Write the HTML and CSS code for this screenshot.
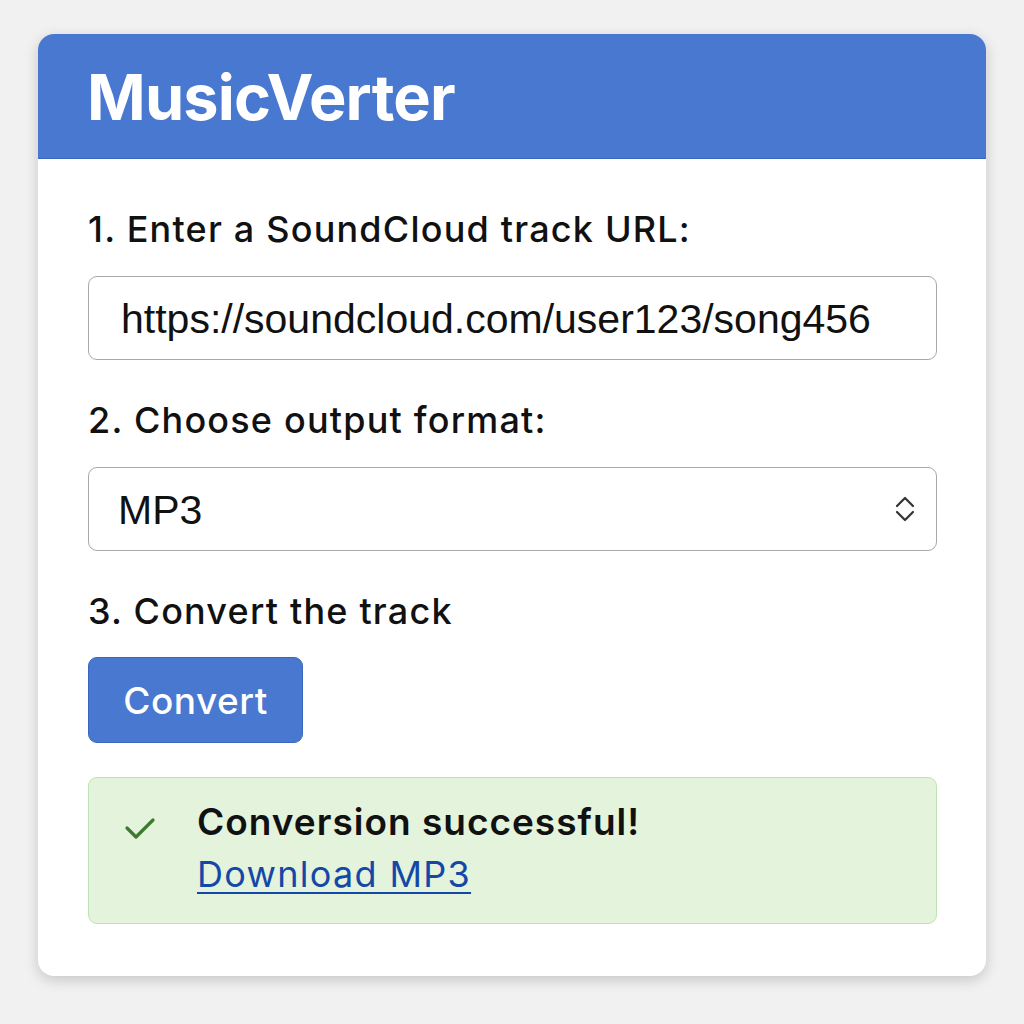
FILE: index.html
```html
<!DOCTYPE html>
<html>
<head>
<meta charset="utf-8">
<link rel="stylesheet" href="styles.css">
</head>
<body>
<div class="card">
  <header class="card-header"><h1 class="title">MusicVerter</h1></header>
  <main class="card-body">
    <label class="step step-1">1. Enter a SoundCloud track URL:</label>
    <div class="field"><span class="field-text">https://soundcloud.com/user123/song456</span></div>
    <label class="step">2. Choose output format:</label>
    <div class="field select">
      <span class="field-text">MP3</span>
      <svg class="chev" width="22" height="28" viewBox="0 0 22 28"><path d="M3 11 L11 3 L19 11" fill="none" stroke="#333" stroke-width="2.2" stroke-linecap="round" stroke-linejoin="round"/><path d="M3 17 L11 25 L19 17" fill="none" stroke="#333" stroke-width="2.2" stroke-linecap="round" stroke-linejoin="round"/></svg>
    </div>
    <label class="step">3. Convert the track</label>
    <div class="btn-row"><button class="btn">Convert</button></div>
    <div class="success">
      <svg class="check" width="34" height="24" viewBox="0 0 34 24"><path d="M3 11 L12 20 L29 3" fill="none" stroke="#3b7a2e" stroke-width="3.2" stroke-linecap="round" stroke-linejoin="round"/></svg>
      <div class="success-text">
        <div class="success-title">Conversion successful!</div>
        <a class="dl" href="#">Download MP3</a>
      </div>
    </div>
  </main>
</div>
</body>
</html>
```
FILE: styles.css
```css
html, body { margin: 0; padding: 0; }
body {
  background: #f1f1f1;
  width: 1024px;
  height: 1024px;
  font-family: Inter, "Noto Sans", sans-serif;
  color: #111;
}
.card {
  margin: 34px 0 0 38px;
  width: 948px;
  height: 942px;
  background: #fff;
  border-radius: 16px;
  box-shadow: 0 4px 14px rgba(0,0,0,0.18);
  overflow: hidden;
  box-sizing: border-box;
}
.card-header {
  background: #4878cf;
  height: 125px;
  display: flex;
  align-items: center;
  padding-left: 49px;
  border-bottom: 1px solid #3a66bd;
  box-sizing: border-box;
}
.title {
  margin: 0;
  color: #fff;
  font-size: 63px;
  font-weight: 700;
  letter-spacing: -0.8px;
  line-height: 1;
  padding-top: 2px;
}
.card-body {
  padding: 48px 49px 0 50px;
  display: flex;
  flex-direction: column;
}
.step {
  display: block;
  font-size: 36px;
  font-weight: 500;
  line-height: 44px;
  letter-spacing: 1.2px;
  margin-bottom: 25px;
}
.field {
  height: 84px;
  border: 1.5px solid #a8a8a8;
  border-radius: 9px;
  box-sizing: border-box;
  display: flex;
  align-items: center;
  padding: 0 32px;
  margin-bottom: 38px;
}
.field-text {
  font-family: "Liberation Sans", Arial, sans-serif;
  font-size: 41px;
  color: #111;
  flex: 1;
  padding-top: 2px;
}
.select { padding: 0 20px 0 29px; }
.chev { flex: none; }
.btn-row { display: flex; margin-top: -1px; margin-bottom: 34px; }
.btn {
  width: 215px;
  height: 86px;
  background: #4878cf;
  color: #fff;
  border: 1px solid #3a66bd;
  border-radius: 9px;
  font-family: Inter, sans-serif;
  font-size: 37px;
  font-weight: 500;
  letter-spacing: 0.5px;
  padding: 0;
}
.success {
  height: 147px;
  background: #e3f3dc;
  border: 1.5px solid #bfe2b2;
  border-radius: 9px;
  box-sizing: border-box;
  display: flex;
  align-items: flex-start;
  padding: 22px 0 0 35px;
}
.check { margin-top: 17px; margin-right: 39px; flex: none; }
.success-text { display: flex; flex-direction: column; }
.success-title {
  font-size: 37px;
  font-weight: 600;
  line-height: 44px;
  letter-spacing: 1px;
  color: #111;
}
.dl {
  font-family: Inter, sans-serif;
  font-size: 36px;
  line-height: 50px;
  margin-top: 5px;
  letter-spacing: 1.3px;
  color: #1547a8;
  text-decoration: underline;
  text-decoration-thickness: 2px;
  text-underline-offset: 5px;
}
```
